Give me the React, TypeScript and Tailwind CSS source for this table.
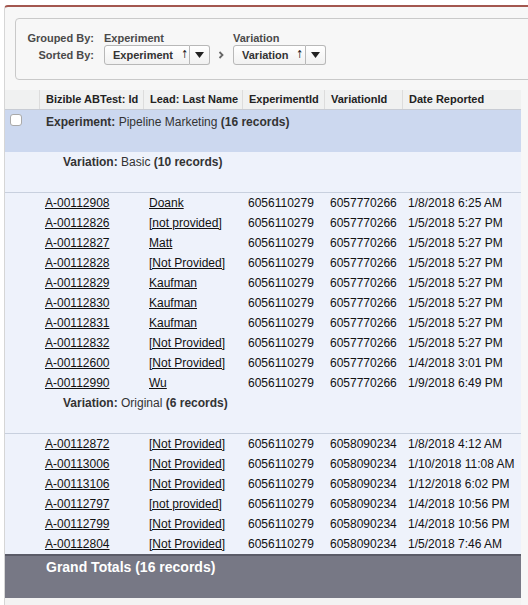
import React from 'react';

const cols = [35, 104, 99, 82, 78, 118];

type Row = { id: string; lead: string; exp: string; vari: string; date: string };

const basic: Row[] = [
  { id: 'A-00112908', lead: 'Doank', exp: '6056110279', vari: '6057770266', date: '1/8/2018 6:25 AM' },
  { id: 'A-00112826', lead: '[not provided]', exp: '6056110279', vari: '6057770266', date: '1/5/2018 5:27 PM' },
  { id: 'A-00112827', lead: 'Matt', exp: '6056110279', vari: '6057770266', date: '1/5/2018 5:27 PM' },
  { id: 'A-00112828', lead: '[Not Provided]', exp: '6056110279', vari: '6057770266', date: '1/5/2018 5:27 PM' },
  { id: 'A-00112829', lead: 'Kaufman', exp: '6056110279', vari: '6057770266', date: '1/5/2018 5:27 PM' },
  { id: 'A-00112830', lead: 'Kaufman', exp: '6056110279', vari: '6057770266', date: '1/5/2018 5:27 PM' },
  { id: 'A-00112831', lead: 'Kaufman', exp: '6056110279', vari: '6057770266', date: '1/5/2018 5:27 PM' },
  { id: 'A-00112832', lead: '[Not Provided]', exp: '6056110279', vari: '6057770266', date: '1/5/2018 5:27 PM' },
  { id: 'A-00112600', lead: '[Not Provided]', exp: '6056110279', vari: '6057770266', date: '1/4/2018 3:01 PM' },
  { id: 'A-00112990', lead: 'Wu', exp: '6056110279', vari: '6057770266', date: '1/9/2018 6:49 PM' },
];

const original: Row[] = [
  { id: 'A-00112872', lead: '[Not Provided]', exp: '6056110279', vari: '6058090234', date: '1/8/2018 4:12 AM' },
  { id: 'A-00113006', lead: '[Not Provided]', exp: '6056110279', vari: '6058090234', date: '1/10/2018 11:08 AM' },
  { id: 'A-00113106', lead: '[Not Provided]', exp: '6056110279', vari: '6058090234', date: '1/12/2018 6:02 PM' },
  { id: 'A-00112797', lead: '[not provided]', exp: '6056110279', vari: '6058090234', date: '1/4/2018 10:56 PM' },
  { id: 'A-00112799', lead: '[Not Provided]', exp: '6056110279', vari: '6058090234', date: '1/4/2018 10:56 PM' },
  { id: 'A-00112804', lead: '[Not Provided]', exp: '6056110279', vari: '6058090234', date: '1/5/2018 7:46 AM' },
];

function SortButton({ label, w }: { label: string; w: string }) {
  return (
    <div className="flex h-[20px]">
      <div className={`${w} flex items-center pl-[8px] gap-[7px] border border-[#b8b8b8] rounded-l-[3px] bg-gradient-to-b from-white to-[#f1f1f1] text-[11px] font-bold text-[#333] whitespace-nowrap`}>
        {label}
        <span className="text-[11px] font-normal text-[#222] font-['DejaVu_Sans',sans-serif] scale-x-75">↑</span>
      </div>
      <div className="w-[20px] flex items-center justify-center border border-l-0 border-[#b8b8b8] rounded-r-[3px] bg-gradient-to-b from-white to-[#f1f1f1]">
        <svg width="9" height="6" viewBox="0 0 9 6"><path d="M0 0h9L4.5 6z" fill="#222" /></svg>
      </div>
    </div>
  );
}

function DataRow({ r }: { r: Row }) {
  return (
    <div className="flex h-[20px] items-center text-[12px] text-[#111]">
      <div className="w-[35px]" />
      <div className="w-[104px] pl-[5px]"><span className="underline">{r.id}</span></div>
      <div className="w-[99px] pl-[5px]"><span className="underline">{r.lead}</span></div>
      <div className="w-[82px] pl-[5px]">{r.exp}</div>
      <div className="w-[78px] pl-[5px]">{r.vari}</div>
      <div className="w-[118px] pl-[5px] whitespace-nowrap">{r.date}</div>
    </div>
  );
}

function VariationHeader({ name, count }: { name: string; count: number }) {
  return (
    <div className="h-[41px] pl-[58px] pt-[1px] text-[12px] text-[#333] border-b border-[#c8d0de]">
      <b>Variation:</b> {name} <b>({count} records)</b>
    </div>
  );
}

export default function App() {
  const headers = ['', 'Bizible ABTest: Id', 'Lead: Last Name', 'ExperimentId', 'VariationId', 'Date Reported'];
  return (
    <div className="w-[528px] h-[605px] overflow-hidden bg-white pt-[5px] font-['Liberation_Sans',Arial,sans-serif]">
      <div className="w-[560px] h-[600px] ml-[4px] bg-[#f7f7f7] border-l border-[#d6d6d6] border-t-[2px] border-t-[#a3574f] rounded-tl-[4px]">
        {/* Filters */}
        <div className="pl-[10px] pt-[11px]">
          <div className="h-[62px] border border-[#c9c9c9] rounded-[4px] pt-[12px] flex">
            <div className="w-[78px] text-right text-[11px] font-bold text-[#4a4a4a] leading-[14px]">
              <div className="h-[14px]">Grouped By:</div>
              <div className="h-[20px] flex items-center justify-end">Sorted By:</div>
            </div>
            <div className="ml-[10px] leading-[14px]">
              <div className="h-[14px] text-[11px] font-bold text-[#4a4a4a]">Experiment</div>
              <SortButton label="Experiment" w="w-[86px]" />
            </div>
            <div className="ml-[8px] mt-[14px] h-[20px] flex items-center">
              <svg width="7" height="8" viewBox="0 0 7 8"><path d="M1.5 1l3 3-3 3" stroke="#666" strokeWidth="1.8" fill="none" /></svg>
            </div>
            <div className="ml-[8px] leading-[14px]">
              <div className="h-[14px] text-[11px] font-bold text-[#4a4a4a]">Variation</div>
              <SortButton label="Variation" w="w-[73px]" />
            </div>
          </div>
        </div>

        {/* Table */}
        <div className="mt-[10px] w-[516px]">
          <div className="flex h-[20px] bg-[#f0f1f1] border-b border-[#c8ccd4] text-[11px] font-bold text-[#222]">
            {headers.map((h, i) => (
              <div key={i} style={{ width: cols[i] }} className="pl-[6px] flex items-center border-r border-[#dcdcdc] last:border-r-0 whitespace-nowrap">
                {h}
              </div>
            ))}
          </div>
          <div className="h-[42px] bg-[#ccd8ef] flex text-[12px] text-[#333]">
            <div className="w-[35px] pl-[5px] pt-[4px]">
              <div className="w-[12px] h-[12px] bg-white border border-[#a9a9a9] rounded-[3px]" />
            </div>
            <div className="pl-[6px] pt-[3px]">
              <b>Experiment:</b> Pipeline Marketing <b>(16 records)</b>
            </div>
          </div>
          <div className="bg-[#eef2fb]">
            <VariationHeader name="Basic" count={10} />
            {basic.map((r) => <DataRow key={r.id} r={r} />)}
            <VariationHeader name="Original" count={6} />
            {original.map((r) => <DataRow key={r.id} r={r} />)}
          </div>
          <div className="h-[44px] bg-[#777885] border-t-[2px] border-[#5b5c68] pl-[41px] pt-[1px] text-[14px] font-bold text-white">
            Grand Totals (16 records)
          </div>
          <div className="h-[10px] bg-[#f3f3f3]" />
        </div>
      </div>
    </div>
  );
}
